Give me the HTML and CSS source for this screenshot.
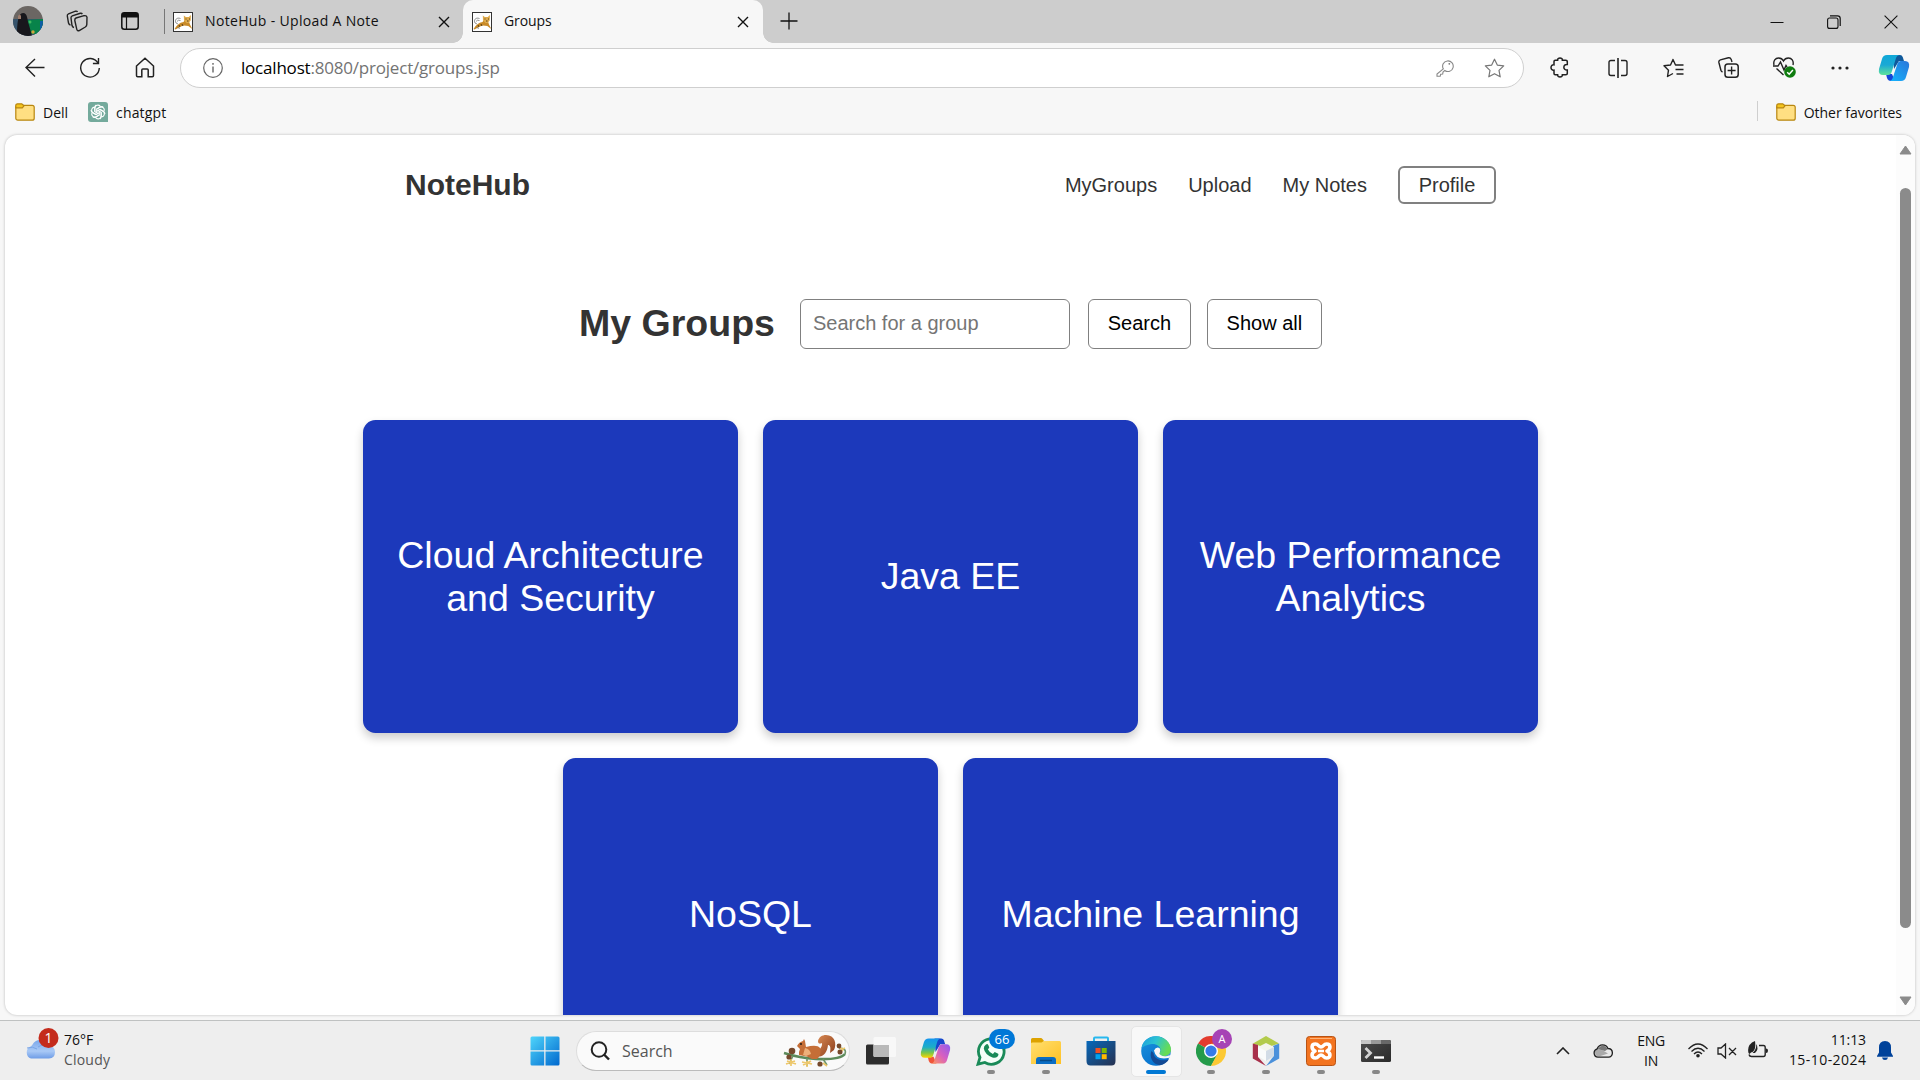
FILE: index.html
```html
<!DOCTYPE html>
<html lang="en">
<head>
<meta charset="utf-8">
<title>Groups</title>
<link rel="stylesheet" href="styles.css">
</head>
<body>
<svg class="defs" width="0" height="0">
  <defs>
    <linearGradient id="win" x1="0" y1="0" x2="1" y2="1"><stop offset="0" stop-color="#4fd5fb"/><stop offset="1" stop-color="#0068ce"/></linearGradient>
    <linearGradient id="cpA" x1="0" y1="0" x2="0" y2="1"><stop offset="0" stop-color="#0fa8d8"/><stop offset=".5" stop-color="#1ba9d5"/><stop offset="1" stop-color="#5fe39a"/></linearGradient>
    <linearGradient id="cpB" x1="1" y1="0" x2="0" y2="1"><stop offset="0" stop-color="#2b76d9"/><stop offset="1" stop-color="#12b6ff"/></linearGradient>
    <linearGradient id="cpC" x1="0" y1="0" x2="0" y2="1"><stop offset="0" stop-color="#1495ef"/><stop offset=".45" stop-color="#1cadc8"/><stop offset=".75" stop-color="#7fc746"/><stop offset="1" stop-color="#ffd400"/></linearGradient>
    <linearGradient id="cpD" x1="1" y1="0" x2="0" y2="1"><stop offset="0" stop-color="#8b5cf0"/><stop offset=".5" stop-color="#d860c0"/><stop offset="1" stop-color="#ff9c58"/></linearGradient>
    <linearGradient id="fold" x1="0" y1="0" x2="1" y2="1"><stop offset="0" stop-color="#ffdf70"/><stop offset="1" stop-color="#ffc123"/></linearGradient>
    <linearGradient id="store" x1="0" y1="0" x2="1" y2="1"><stop offset="0" stop-color="#0769bb"/><stop offset="1" stop-color="#26304f"/></linearGradient>
    <linearGradient id="edgeA" x1="0" y1="0" x2="1" y2=".4"><stop offset="0" stop-color="#1a9ae0"/><stop offset=".5" stop-color="#2cc3d2"/><stop offset="1" stop-color="#66dc55"/></linearGradient>
    <linearGradient id="edgeB" x1="0" y1="0" x2=".6" y2="1"><stop offset="0" stop-color="#1b93dc"/><stop offset="1" stop-color="#0670ce"/></linearGradient>
    <linearGradient id="cloud" x1="0" y1="0" x2="0" y2="1"><stop offset="0" stop-color="#79a6ea"/><stop offset=".6" stop-color="#a9c9f6"/><stop offset="1" stop-color="#6e9ce6"/></linearGradient>
    <linearGradient id="term" x1="0" y1="0" x2="1" y2="1"><stop offset="0" stop-color="#4c4c4c"/><stop offset="1" stop-color="#2a2a2a"/></linearGradient>
    <linearGradient id="tail" x1="0" y1="0" x2="1" y2="1"><stop offset="0" stop-color="#d98952"/><stop offset="1" stop-color="#8a3d1c"/></linearGradient>
    <clipPath id="face"><circle cx="15" cy="15" r="15"/></clipPath>
    <symbol id="i-cat" viewBox="0 0 20 20"><rect x=".5" y=".5" width="19" height="19" fill="#fff" stroke="#333"/><path d="M1.500 17C4 13 6.500 10.500 10.500 10l1.500-2 4 1.500 1 3 2.300 4.500-4-3-4.500-.5-3 1-5.300 3z" fill="#c98a27"/><path d="M10.800 3.500l2 1.500h3l2.200-2-.3 5.500L15.500 11h-2L11 8.500z" fill="#deaa4c"/><path d="M12.500 7h1M16 7h1M14 9h1.500M6 13l1 2M9 12l1 2" stroke="#4c3514" stroke-width=".9"/><path d="M7.500 6.500C3.500 5 1.500 8 3 11l2 1M4 9.500q1-2 3.500-1M4.500 15.500l2.500.8" fill="none" stroke="#777" stroke-width=".8"/></symbol>
    <symbol id="i-x" viewBox="0 0 12 12"><path d="M1 1l10 10M11 1L1 11" stroke="#111" stroke-width="1.400" fill="none"/></symbol>
    <symbol id="i-folder" viewBox="0 0 20 18"><rect x=".8" y="2.300" width="18.400" height="14.900" rx="2" fill="#ffdf82" stroke="#b8860f" stroke-width="1.200"/><path d="M.8 4.800V2.500A1.700 1.700 0 0 1 2.500.8h4.300L9 2.800 7.300 4.800z" fill="#f4c51d" stroke="#b8860f" stroke-width="1.200"/></symbol>
    <path id="petal" d="M6.800 9.800V6.200A3.100 3.100 0 0 1 12.300 4.300M8.700 10.800V7.100l3.600-2.100a3.100 3.100 0 0 1 2.900 0"/>
  </defs>
</svg>

<header class="tabs">
  <svg class="avatar" viewBox="0 0 30 30"><g clip-path="url(#face)"><rect width="30" height="30" fill="#6b6663"/><rect y="13" width="30" height="17" fill="#36536b"/><path d="M14 14l16-1v15H14z" fill="#07834a"/><circle cx="17" cy="16" r="1.500" fill="#42b860"/><circle cx="20" cy="26" r="1.700" fill="#d0a53e"/><path d="M27 15h3v11h-3z" fill="#0d5fa5"/><path d="M4 30C4 17 5 7 10 7s4 7 6 12l3 11z" fill="#18171c"/><path d="M5 10q2-3 3 0v3H5z" fill="#9e7c6c"/></g></svg>
  <div class="tabs-tool spaces"><svg width="24" height="24" viewBox="0 0 24 24"><g fill="none" stroke="#222" stroke-width="1.400"><path d="M11 9l8-2.300q2.500-.5 3 1.500l-.2 7.300q0 1.500-1.500 2.500l-6 3.500q-2 .8-2.500-1.200L9.800 11.500Q9.500 9.700 11 9z"/><path d="M9 18.500q-1.500-.2-2-2L6 9q-.2-1.500 1.300-2.200l8-2.500q1.500-.3 2 .8M5.500 16q-1.500-.2-2-2L2.300 7Q2 5.500 3.500 4.900l7-2.700q1.500-.3 2 .8"/></g></svg></div>
  <div class="tabs-tool"><svg width="18" height="18" viewBox="0 0 18 18"><rect x=".8" y=".8" width="16.400" height="16.400" rx="2.500" fill="none" stroke="#111" stroke-width="1.500"/><path d="M.8 5.500V3a2.200 2.200 0 0 1 2.200-2.200h12A2.200 2.200 0 0 1 17.200 3v2.500z" fill="#111"/><path d="M5.500 5v12" stroke="#111" stroke-width="1.200"/></svg></div>
  <div class="tab idle"><svg class="fav" width="20" height="20"><use href="#i-cat"/></svg><span class="tab-title wide">NoteHub - Upload A Note</span><svg width="12" height="12"><use href="#i-x"/></svg></div>
  <div class="tab active"><svg class="fav" width="20" height="20"><use href="#i-cat"/></svg><span class="tab-title">Groups</span><svg width="12" height="12"><use href="#i-x"/></svg></div>
  <svg class="plus" width="18" height="18" viewBox="0 0 18 18"><path d="M9 .5v17M.5 9h17" stroke="#111" stroke-width="1.300"/></svg>
  <div class="window-buttons">
    <div><svg width="14" height="14" viewBox="0 0 14 14"><path d="M.5 7.500h13" stroke="#111"/></svg></div>
    <div><svg width="14" height="14" viewBox="0 0 14 14"><rect x=".6" y="3" width="10.400" height="10.400" rx="2" fill="none" stroke="#111" stroke-width="1.100"/><path d="M3 .9h7.500Q13.200.9 13.200 3.500V11" fill="none" stroke="#111" stroke-width="1.200"/></svg></div>
    <div><svg width="14" height="14" viewBox="0 0 14 14"><path d="M.6.6l12.800 12.800M13.400.6L.6 13.400" stroke="#111" stroke-width="1.100"/></svg></div>
  </div>
</header>

<div class="toolbar">
  <div class="tool"><svg width="20" height="20" viewBox="0 0 20 20"><path d="M19.500 9.500H1M10 1L1 9.500 10 18.500" fill="none" stroke="#222" stroke-width="1.400"/></svg></div>
  <div class="tool"><svg width="22" height="22" viewBox="0 0 22 22"><path d="M19 6A9.300 9.300 0 1 0 20.300 11M19.500 1v5.500h-5.600" fill="none" stroke="#222" stroke-width="1.400"/></svg></div>
  <div class="tool"><svg width="20" height="21" viewBox="0 0 20 21"><path d="M1.500 9L10 1.300 18.500 9v9.500q0 1.200-1.200 1.200h-4.100V13q0-1-1-1H7.800q-1 0-1 1v6.700H2.700q-1.200 0-1.200-1.200z" fill="none" stroke="#222" stroke-width="1.500"/></svg></div>
  <div class="address">
    <svg width="20" height="20" viewBox="0 0 20 20"><circle cx="10" cy="10" r="9.300" fill="none" stroke="#666" stroke-width="1.200"/><path d="M10 8.500v6M10 5v1.700" stroke="#666" stroke-width="1.400"/></svg>
    <span class="url"><b>localhost</b>:8080/project/groups.jsp</span>
    <svg class="key" width="18" height="18" viewBox="0 0 18 18"><path d="M7.300 9.800L1 15v2.200h3.200l.5-2 2-.2.300-2 1.800-1.500a5.300 5.300 0 1 0-1.500-1.700z" fill="none" stroke="#888" stroke-width="1.100"/><circle cx="13.300" cy="4.800" r=".9" fill="#777"/></svg>
    <svg width="21" height="20" viewBox="0 0 21 20"><path d="M10.500 1.200l2.800 5.900 6.400.8-4.700 4.500 1.200 6.400-5.700-3.100-5.700 3.100L6 12.400 1.300 7.900l6.400-.8z" fill="none" stroke="#777" stroke-width="1.200" stroke-linejoin="round"/></svg>
  </div>
  <div class="tool ext"><svg width="20" height="21" viewBox="0 0 20 21"><path d="M4 4.500q0-1.200 1.200-1.200h2.400C7 .3 13 .3 12.400 3.300h3.400q1.500 0 1.500 1.200v3c-4.600-.6-4.600 6 0 5.500v3.500q0 1.200-1.500 1.200h-3.400c.6 3-5.400 3-4.800 0H5.200Q4 17.700 4 16.500v-3.300C0 13.800 0 7.200 4 7.800z" fill="none" stroke="#222" stroke-width="1.500"/></svg></div>
  <i class="tool-divider"></i>
  <div class="tool end"><svg width="20" height="20" viewBox="0 0 20 20"><path d="M7 2.500H3Q1 2.500 1 4.500v11q0 2 2 2h4M13 2.500h4q2 0 2 2v11q0 2-2 2h-4" fill="none" stroke="#222" stroke-width="1.400"/><path d="M10 0v20" stroke="#222" stroke-width="1.600"/></svg></div>
  <div class="tool end"><svg width="21" height="20" viewBox="0 0 21 20"><path d="M19.500 7H12.500L10 1.500 7.500 7 1 7.800l4.500 4.400L4.500 18.500l5.500-3M13.500 7h7M12.500 11.500h8M13.500 16h7" fill="none" stroke="#222" stroke-width="1.400" stroke-linejoin="round"/></svg></div>
  <div class="tool end"><svg width="21" height="21" viewBox="0 0 21 21"><rect x="7" y="7" width="13.200" height="13.200" rx="2.800" fill="none" stroke="#222" stroke-width="1.500"/><path d="M13.600 9.500v8M9.600 13.500h8M4.500 15q-1.200-.5-1.600-1.800L.9 5.500q-.4-2 1.500-2.700l8-2q2-.4 2.800 1.600L14 5" fill="none" stroke="#222" stroke-width="1.400"/></svg></div>
  <div class="tool end"><svg width="23" height="21" viewBox="0 0 23 21"><path d="M1 8C0 3.500 2.500 1 5.500 1 8 1 9.500 2 10.500 4 11.500 2 13 1 15.500 1 18.500 1 21 3.500 20 8M0 9h5l2.500-4 3.500 8 2-4.500 1 1.500M3.500 11.500L10.500 18" fill="none" stroke="#222" stroke-width="1.400"/><circle cx="17" cy="15" r="5.800" fill="#107c10"/><path d="M14.200 15.300l2 1.900 3.700-4.300" fill="none" stroke="#fff" stroke-width="1.500"/></svg></div>
  <div class="tool"><svg width="18" height="4" viewBox="0 0 18 4"><g fill="#222"><circle cx="2" cy="2" r="1.600"/><circle cx="9" cy="2" r="1.600"/><circle cx="16" cy="2" r="1.600"/></g></svg></div>
  <div class="tool copilot"><svg width="32" height="28" viewBox="0 0 32 28"><path d="M15 1h7q2 0 2.700 2L26 7h-5l-5 8z" fill="#10599b"/><path d="M8 20h6l3 7h-4q-3 0-4-3z" fill="#1646d8"/><path d="M9 1h13q-3 0-4 3l-4 13q-1 4-4 4H5q-5 0-4-6L4 5q1-4 5-4z" fill="url(#cpA)"/><path d="M23 27H11q3 0 4-4l4-12q1-4 4-4h4q5 0 4 6l-3 10q-1 4-5 4z" fill="url(#cpB)"/></svg></div>
</div>

<nav class="favorites">
  <span class="favorite"><svg width="20" height="18"><use href="#i-folder"/></svg>Dell</span>
  <span class="favorite gpt"><svg width="20" height="20" viewBox="0 0 20 20"><path d="M3 0h14q3 0 3 3v17H3q-3 0-3-3V3q0-3 3-3z" fill="#74aa9c"/><g fill="none" stroke="#fff" stroke-width="1.100"><use href="#petal"/><use href="#petal" transform="rotate(60 10 10)"/><use href="#petal" transform="rotate(120 10 10)"/><use href="#petal" transform="rotate(180 10 10)"/><use href="#petal" transform="rotate(240 10 10)"/><use href="#petal" transform="rotate(300 10 10)"/></g></svg>chatgpt</span>
  <span class="favorite other"><svg width="20" height="18"><use href="#i-folder"/></svg>Other favorites</span>
</nav>

<div class="viewport">
  <main class="page">
    <div class="site-header">
      <span class="logo">NoteHub</span>
      <div class="links"><a>MyGroups</a><a>Upload</a><a>My Notes</a><a class="profile">Profile</a></div>
    </div>
    <div class="search-row">
      <h1>My Groups</h1>
      <input type="text" placeholder="Search for a group">
      <button class="find">Search</button>
      <button class="all">Show all</button>
    </div>
    <section class="cards">
      <div class="card">Cloud Architecture and Security</div>
      <div class="card">Java EE</div>
      <div class="card">Web Performance Analytics</div>
      <div class="card">NoSQL</div>
      <div class="card">Machine Learning</div>
    </section>
  </main>
  <div class="scrollbar">
    <svg width="13" height="10" viewBox="0 0 13 10"><path d="M6.500 1L12 9H1z" fill="#8b8b8b" stroke="#8b8b8b" stroke-linejoin="round"/></svg>
    <i class="thumb"></i>
    <svg width="13" height="10" viewBox="0 0 13 10"><path d="M6.500 9L12 1H1z" fill="#8b8b8b" stroke="#8b8b8b" stroke-linejoin="round"/></svg>
  </div>
</div>

<footer class="taskbar">
  <div class="weather">
    <svg width="36" height="34" viewBox="0 0 36 34"><path d="M7 31.500a6.500 6.500 0 0 1-.5-12C9 19 9 13 16 13q6 0 8 6 7 0 7 6t-6 6.500z" fill="url(#cloud)"/><path d="M3 21q6-2 10 1M14 20q6-4 10 0" fill="none" stroke="#7aa5e6"/><circle cx="24.500" cy="11" r="10" fill="#c42b1c"/><text x="24.500" y="16" class="badge-text">1</text></svg>
    <div><p>76°F</p><p class="dim">Cloudy</p></div>
  </div>
  <div class="apps">
    <div class="app"><svg width="30" height="30" viewBox="0 0 30 30"><path d="M2 .5h12.200v13.700H.5V2Q.5.500 2 .5zM15.500.5H28q1.500 0 1.500 1.500v12.200h-14zM.5 15.500h13.700v14H2Q.5 29.500.5 28zM15.500 15.500h14V28q0 1.500-1.500 1.500H15.500z" fill="url(#win)"/></svg></div>
    <div class="search">
      <svg width="20" height="20" viewBox="0 0 20 20"><circle cx="9" cy="8.500" r="7.300" fill="none" stroke="#222" stroke-width="2"/><path d="M14 13.500l5 5" stroke="#222" stroke-width="2.400"/></svg>
      <span>Search</span>
      <svg class="squirrel" width="64" height="34" viewBox="0 0 64 34"><path d="M1 19q16 5 32 6 24 1 29-5" fill="none" stroke="#5c8a5a" stroke-width="2.600"/><path d="M62 20q2-6-6-6M10 22l-4 8M24 24v8M40 25l4 6" fill="none" stroke="#6d9468" stroke-width="1.600"/><g stroke="#edc76b" stroke-width="1.700" fill="none"><path d="M4 27l9 3M3 30l9-3M8 25v7M19 28l10 2M20 31l8-4M24 27v6M40 29l4 3M55 17l7-3M57 13l3 4"/></g><g fill="#76492c"><circle cx="9" cy="17" r="3.300"/><circle cx="6" cy="23" r="2.600"/><circle cx="37" cy="30" r="2.600"/><circle cx="56" cy="12" r="2.400"/><circle cx="57" cy="18" r="2.500"/></g><path d="M34 22C33 17 40 14 39 9c-2 1-4 1-4-2 1-4 4-6 8-6 9 0 11 9 8 15l-4 3c1-6 0-8-2-8-1 8-5 13-11 11z" fill="url(#tail)"/><path d="M14 12q2-4 6-5l1-2 1 2 1 6q11-3 14 1 2 7-3 11h-5q-5-3-8-3l-5-1v-3l1-3z" fill="#c56e37"/><path d="M22 14q5 1 6 6l-5 2-3-1z" fill="#eeb07a"/><circle cx="18" cy="10" r=".9" fill="#111"/></svg>
    </div>
    <div class="app first"><svg width="30" height="28" viewBox="0 0 30 28"><rect y="7.500" width="23" height="20" rx="1.500" fill="#2c2c2c"/><rect x="7.500" width="22.500" height="20" rx="1.500" fill="#f8f8f8"/><path d="M7.500 8H23v12H9q-1.500 0-1.500-1.500z" fill="#b9b9b9"/></svg></div>
    <div class="app"><svg width="31" height="28" viewBox="0 0 32 28"><path d="M15 1h7q2 0 2.700 2L26 7h-5l-5 8z" fill="#1747cc"/><path d="M8 20h6l3 7h-4q-3 0-4-3z" fill="#f0563a"/><path d="M9 1h13q-3 0-4 3l-4 13q-1 4-4 4H5q-5 0-4-6L4 5q1-4 5-4z" fill="url(#cpC)"/><path d="M23 27H11q3 0 4-4l4-12q1-4 4-4h4q5 0 4 6l-3 10q-1 4-5 4z" fill="url(#cpD)"/></svg></div>
    <div class="app running"><svg width="30" height="30" viewBox="0 0 30 30"><path d="M2 28.200l2-6.700A12.800 12.800 0 1 1 8.800 26.500z" fill="#f6fff9" stroke="#1a8a58" stroke-width="2.800"/><path d="M10 8.500q1.500-1 2.300.5l1 2.500-1.400 2q2 3.600 5 4.500l1.800-2 3.500 1.700q1 1-.8 3-2 1.600-5 .7-7.500-2.700-8.600-8.900-.1-2.500 2.200-4z" fill="#1a8a58"/></svg><span class="badge blue">66</span></div>
    <div class="app running"><svg width="30" height="28" viewBox="0 0 30 28"><path d="M0 2.500Q0 1 1.500 1h8.300q1 0 1.700 1l1.500 2-2 4H0z" fill="#dda200"/><path d="M0 6.500q0-1 1.500-1h9L13 4h15.500Q30 4 30 5.500V27H0z" fill="url(#fold)"/><path d="M5 27v-4q0-3 3-3h14q3 0 3 3v4z" fill="#0a6dc4"/><path d="M9 23.500h12" stroke="#064a87" stroke-width="1.500"/></svg></div>
    <div class="app"><svg width="30" height="30" viewBox="0 0 30 30"><path d="M8 6V2.500q0-1 1-1h12q1 0 1 1V6" fill="none" stroke="#28b8ee" stroke-width="2"/><path d="M.5 5h29v20q0 4.500-4 4.500h-21Q.5 29.500.5 25z" fill="url(#store)"/><path d="M9.500 12h5v5h-5z" fill="#f25022"/><path d="M15.700 12h5v5h-5z" fill="#7fba00"/><path d="M9.500 18.200h5v5h-5z" fill="#00a4ef"/><path d="M15.700 18.200h5v5h-5z" fill="#ffb900"/></svg></div>
    <div class="app current"><svg width="30" height="30" viewBox="0 0 30 30"><circle cx="15" cy="15" r="14.800" fill="url(#edgeB)"/><path d="M.5 12C1.500 5 7.500.2 15 .2 23.500.2 30 7 30 13.500c0 4-3 6.500-7 6.500-3 0-5-1-5-2 0-1 1.500-1.500 1.500-4C19.500 10 15 7.500 10.500 8 5.500 8.500 2 11 .5 12z" fill="url(#edgeA)"/><path d="M10.500 15C8 20 11 28.500 19 29.200c4-.7 7.500-3 9-6.200-5 3-15 1-15.500-6z" fill="#134a94"/><path d="M13 14.500q2-4 5.500-2.500 1.800 2.500.3 4.500-1.300 1.300.8 2.500 4 2.500 9.900 0l-1 2.800Q15 25 13 14.500z" fill="#f7f7f7"/><path d="M30 13.500c0 4-3 6.500-7 6.500h5q2-2 2-6.500z" fill="#f7f7f7" opacity=".3"/></svg></div>
    <div class="app running"><svg width="30" height="30" viewBox="0 0 30 30"><path d="M15 15L2 7.500A15 15 0 0 1 28 7.500z" fill="#e33b2e"/><path d="M15 15l6.500 3.700L15 30A15 15 0 0 1 2 7.500z" fill="#249b4a"/><path d="M15 7.800h13.200A15 15 0 0 1 15 30l6-11.500z" fill="#fcc934"/><circle cx="15" cy="15" r="7" fill="#fff"/><circle cx="15" cy="15" r="5.600" fill="#357be8"/></svg><span class="badge purple">A</span></div>
    <div class="app running"><svg width="28" height="30" viewBox="0 0 28 30"><path d="M14 0L27 7.500 14 12 1 7.500z" fill="#b3cb4b"/><path d="M.8 7.500L6 9v12l8 9L.8 22.500z" fill="#a8304b"/><path d="M27.200 7.500L21 10v11l-7 9 13.200-7.500z" fill="#4b91db"/><path d="M14 7l8 4v9l-8 5-8-5v-9z" fill="#f4f5ec"/><path d="M14 15l8-4v9l-8 5z" fill="#d2dce6"/><path d="M6 11l8 4v10l-8-5z" fill="#f9fbfb"/></svg></div>
    <div class="app running"><svg width="30" height="30" viewBox="0 0 30 30"><rect x=".5" y=".5" width="29" height="29" rx="3" fill="#f37420" stroke="#b85314"/><path d="M4 2.500h22" stroke="#ffb377"/><path d="M9 15C5 13 5 8 9.500 8c3 0 3 3 5.500 3s2.500-3 5.500-3C25 8 25 13 21 15c4 2 4 7-.5 7-3 0-3-3-5.500-3s-2.500 3-5.500 3C5 22 5 17 9 15z" fill="none" stroke="#fff" stroke-width="3.600" stroke-linejoin="round"/><path d="M12 15h6" stroke="#fff" stroke-width="2.600"/></svg></div>
    <div class="app running"><svg width="30" height="22" viewBox="0 0 30 22"><rect width="30" height="22" rx="1.500" fill="url(#term)"/><path d="M0 4V1.500Q0 0 1.500 0H10v4z" fill="#c5c5c5"/><path d="M10 0h10v4H10z" fill="#999"/><path d="M20 0h8.500Q30 0 30 1.500V4H20z" fill="#686868"/><path d="M4.500 8l5 5-5 5" fill="none" stroke="#d2d2d2" stroke-width="2.800"/><path d="M13 17.500h10" stroke="#fff" stroke-width="2.400"/></svg></div>
  </div>
  <div class="tray">
    <svg class="chev" width="14" height="8" viewBox="0 0 14 8"><path d="M1 7l6-6 6 6" fill="none" stroke="#222" stroke-width="1.600"/></svg>
    <svg class="drive" width="20" height="14" viewBox="0 0 20 14"><path d="M5 13.200a4.300 4.300 0 0 1-.8-8.400C6-.5 13-.5 15 4.500c6 .3 5.500 8.700.5 8.700z" fill="#e9e9e9"/><path d="M4 12A4 4 0 0 1 4 5l6 1.500 5 3-9 3z" fill="#aaa"/><path d="M4.500 5Q10-2 15 5l-3 2z" fill="#777"/><path d="M5 13.200a4.300 4.300 0 0 1-.8-8.400C6-.5 13-.5 15 4.500c6 .3 5.500 8.700.5 8.700z" fill="none" stroke="#222" stroke-width="1.300"/></svg>
    <div class="lang">ENG<br>IN</div>
    <svg class="wifi" width="20" height="15" viewBox="0 0 20 15"><g fill="none" stroke="#222" stroke-width="1.300"><path d="M.5 6q9.500-10 19 0M3.500 8.500q6.500-6.500 13 0M6 11q4-4 8 0"/></g><circle cx="10" cy="12.800" r="1.800" fill="#222"/></svg>
    <svg class="volume" width="20" height="16" viewBox="0 0 20 16"><path d="M1 5h3l4.500-4v14L4 11H1zM12 5l7 7M19 5l-7 7" fill="none" stroke="#222" stroke-width="1.300"/></svg>
    <svg class="battery" width="20" height="18" viewBox="0 0 20 18"><path d="M11 4.500h4.500q1.700 0 1.700 2v7q0 2-1.700 2H3.500Q1.500 15.500 1 13.500" fill="none" stroke="#222" stroke-width="1.400"/><path d="M18 7.500q2 0 2 2.200t-2 2.300z" fill="#222"/><path d="M.5 12Q-1.500 3.500 7 0q1.500 10-4 11.500L1.500 13z" fill="#222"/><path d="M8.300 3q3 5-1.300 9H4.500q4-3 3.800-9z" fill="#222"/></svg>
    <div class="clock">11:13<br><span>15-10-2024</span></div>
    <svg class="bell" width="16" height="19" viewBox="0 0 16 19"><path d="M8 0q6 0 6 6.500v5l2 3.500v.8H0V15l2-3.500v-5Q2 0 8 0zM5 16.500h6Q10.500 19 8 19t-3-2.500z" fill="#00429a"/></svg>
  </div>
</footer>
</body>
</html>
```
FILE: styles.css
```css
* { box-sizing: border-box; }
body { margin: 0; width: 1920px; height: 1080px; overflow: hidden; display: flex; flex-direction: column; background: #f7f7f7; color: #111; font-family: "Open Sans", "Noto Sans", sans-serif; font-size: 14px; }
svg { display: block; flex: none; }
.defs { position: absolute; }
p, h1 { margin: 0; }

/* Tab strip */
.tabs { height: 43px; flex: none; display: flex; align-items: center; background: #cdcdcd; padding-left: 13px; }
.avatar { width: 30px; height: 30px; margin-bottom: 1px; }
.tabs-tool { width: 53px; padding-bottom: 1px; display: flex; justify-content: center; }
.spaces { margin-left: 7px; }
.tab { display: flex; align-items: center; height: 43px; padding: 1px 14px 0 9px; }
.idle { width: 299px; margin-left: 8px; padding-right: 13px; position: relative; }
.idle::before { content: ""; position: absolute; left: 0; top: 9px; width: 1px; height: 25px; background: #777; }
.active { width: 300px; background: #f7f7f7; border-radius: 10px 10px 0 0; position: relative; }
.active::before, .active::after { content: ""; position: absolute; bottom: 0; width: 10px; height: 10px; }
.active::before { left: -10px; background: radial-gradient(circle at 0 0, #cdcdcd 9.5px, #f7f7f7 10px); }
.active::after { right: -10px; background: radial-gradient(circle at 100% 0, #cdcdcd 9.5px, #f7f7f7 10px); }
.fav { margin-right: 12px; }
.tab-title { flex: 1; padding-bottom: 4px; white-space: nowrap; letter-spacing: -0.1px; }
.tab-title.wide { letter-spacing: 0.34px; }
.plus { margin-left: 17px; margin-bottom: 2px; }
.window-buttons { margin-left: auto; margin-right: 1px; display: flex; }
.window-buttons div { width: 57px; display: flex; justify-content: center; }

/* Toolbar */
.toolbar { height: 49px; flex: none; display: flex; align-items: center; padding-left: 7px; }
.tool { width: 55px; display: flex; justify-content: center; flex: none; }
.end { width: 55.5px; }
.copilot { width: 53px; }
.address { width: 1344px; height: 40px; margin-left: 8px; flex: none; background: #fff; border: 1px solid #cfcfcf; border-radius: 20px; display: flex; align-items: center; padding: 0 18px 0 22px; }
.url { flex: 1; margin-left: 18px; padding-bottom: 1px; color: #737373; font-size: 17px; letter-spacing: -0.2px; }
.url b { font-weight: 400; color: #000; }
.key { margin-right: 30px; }
.ext { margin-left: 8px; }
.tool-divider { width: 2px; height: 20px; margin: 0 1px 0 2px; background: #cfcfcf; }

/* Favorites */
.favorites { height: 43px; flex: none; display: flex; align-items: center; padding: 0 18px 3px 15px; }
.favorite { display: flex; align-items: center; gap: 8px; }
.gpt { margin-left: 20px; letter-spacing: 0.15px; }
.other { margin-left: auto; position: relative; }
.other::before { content: ""; position: absolute; left: -19px; top: -2px; width: 1px; height: 20px; background: #cfcfcf; }

/* Web page */
.viewport { width: 1910px; height: 880px; margin-left: 5px; flex: none; display: flex; background: #fff; border-radius: 12px; overflow: hidden; box-shadow: 0 0 3px rgba(0, 0, 0, .25); }
.page { width: 1891px; font: 20px "Liberation Sans", Arial, sans-serif; color: #333; }
.site-header { width: 1091px; height: 38px; margin: 31px auto 0; display: flex; align-items: center; justify-content: space-between; }
.logo { font-size: 30px; font-weight: 700; }
.links { display: flex; align-items: center; gap: 31px; }
.profile { width: 98px; height: 38px; padding-top: 6px; text-align: center; border: 2px solid #808080; border-radius: 6px; }
.search-row { height: 50px; margin-top: 95px; display: flex; align-items: center; justify-content: center; }
.search-row h1 { font-size: 37.5px; padding-bottom: 2px; }
.search-row input, .search-row button { height: 50px; border: 1px solid #808080; border-radius: 6px; background: #fff; font: 20px "Liberation Sans", Arial, sans-serif; color: #000; }
.search-row input { width: 270px; margin-left: 25px; padding: 0 12px 2px; }
.search-row input::placeholder { color: #757575; }
.search-row button { padding: 0 0 2px; }
.search-row .find { width: 103px; margin-left: 18px; }
.search-row .all { width: 115px; margin-left: 16px; }
.cards { width: 1175px; margin: 71px auto 0; display: flex; flex-wrap: wrap; justify-content: center; gap: 25px; }
.card { width: 375px; height: 313px; padding: 25px; display: flex; align-items: center; justify-content: center; text-align: center; background: #1c39bb; color: #fff; font-size: 37.5px; line-height: 43px; border-radius: 12.5px; box-shadow: 0 5px 10px rgba(0, 0, 0, .2); }
.scrollbar { width: 19px; background: #fcfcfc; display: flex; flex-direction: column; align-items: center; padding-top: 10px; }
.thumb { width: 11px; height: 740px; margin: 33px 0 68px; border-radius: 6px; background: #8b8b8b; }

/* Taskbar */
.taskbar { height: 60px; margin-top: 5px; flex: none; display: flex; background: #eee; border-top: 1px solid #bfc1c1; }
.weather { width: 517px; padding: 6px 0 0 24px; display: flex; gap: 4px; line-height: 20px; }
.weather > div { padding-top: 3px; }
.dim { color: #555; letter-spacing: 0.2px; }
.badge-text { font-size: 14px; fill: #fff; text-anchor: middle; }
.apps { display: flex; align-items: center; }
.app { width: 55px; height: 59px; display: flex; align-items: center; justify-content: center; position: relative; }
.first { margin-left: 3px; }
.running::after, .current::after { content: ""; position: absolute; bottom: 6px; left: 24px; width: 8px; height: 4px; border-radius: 2px; background: #888; }
.current::before { content: ""; position: absolute; left: 3px; top: 5px; width: 49px; height: 49px; border-radius: 5px; background: #f8f8f8; border: 1px solid #e5e5e5; }
.current svg { position: relative; }
.current::after { left: 18px; width: 20px; background: #0078d4; }
.badge { position: absolute; top: 8px; height: 20px; border-radius: 10px; color: #fff; text-align: center; line-height: 20px; }
.blue { left: 26px; width: 26px; background: #0078d7; font-size: 13px; }
.purple { left: 29px; width: 20px; background: #a643b5; font-size: 11px; }
.search { width: 274px; height: 40px; margin-left: 4px; padding: 0 2px 0 13px; display: flex; align-items: center; border-radius: 20px; background: #fafafa; border: 1px solid #ddd; border-bottom-color: #bbb; font-size: 16px; color: #555; letter-spacing: 0; }
.search span { flex: 1; margin-left: 12px; }
.tray { flex: 1; display: flex; align-items: center; justify-content: flex-end; padding-right: 27px; line-height: 20px; }
.drive { margin-left: 23px; }
.lang { width: 40px; margin-left: 18px; text-align: center; letter-spacing: -0.3px; }
.wifi { margin-left: 17px; }
.volume { margin-left: 9px; }
.battery { margin-left: 11px; margin-bottom: 2px; }
.clock { width: 98px; padding-bottom: 2px; text-align: right; letter-spacing: -0.1px; }
.clock span { letter-spacing: 0.45px; margin-right: -0.45px; }
.bell { margin-left: 11px; }
```
